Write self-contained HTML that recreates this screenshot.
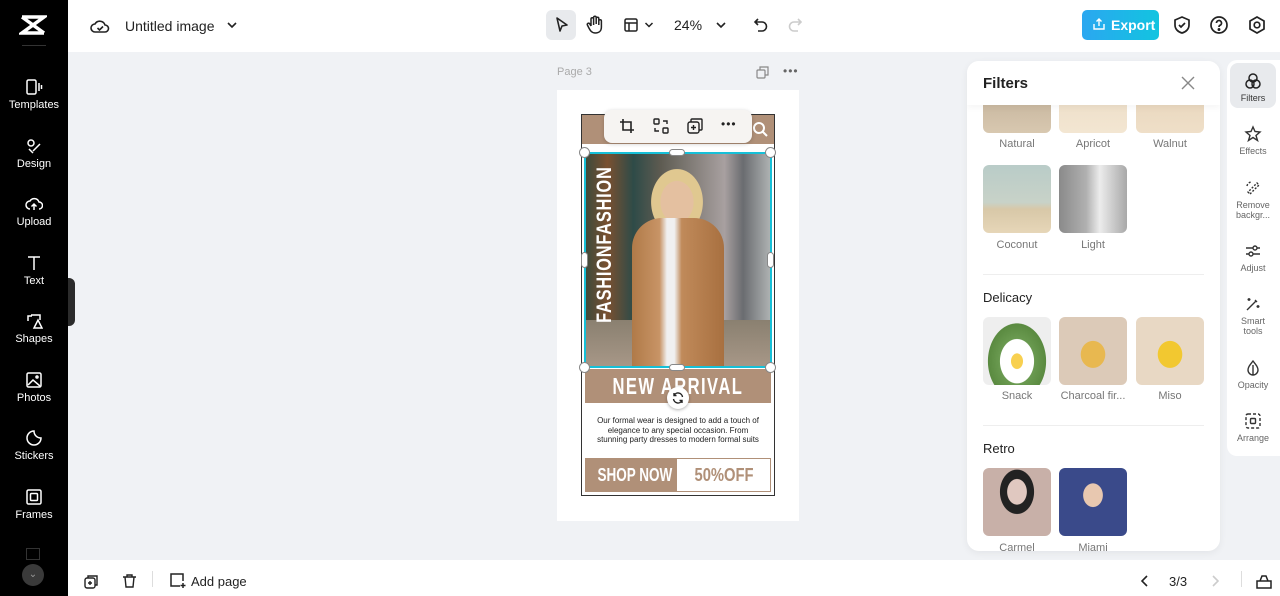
<!DOCTYPE html>
<html><head><meta charset="utf-8"><style>
*{box-sizing:border-box;margin:0;padding:0}
body{width:1280px;height:596px;overflow:hidden;font-family:"Liberation Sans",sans-serif;background:#f0f2f5;position:relative;color:#1f1f1f}
.abs{position:absolute}
.side{left:0;top:0;width:68px;height:596px;background:#000}
.si{position:absolute;left:0;width:68px;text-align:center;color:#fff;font-size:11px}
.si svg{display:block;margin:0 auto 3px}
.top{left:68px;top:0;width:1212px;height:52px;background:#fff}
.bot{left:68px;top:560px;width:1212px;height:36px;background:#fff}
.th{position:absolute;width:68px;height:68px;border-radius:6px}
.lb{position:absolute;width:80px;text-align:center;font-size:11px;color:#777}
.rr{position:absolute;left:0;width:52px;text-align:center;font-size:9px;color:#666;line-height:10px}
.rr svg{display:block;margin:0 auto 3px}
.cond{display:inline-block;white-space:nowrap}
</style></head><body>
<div class="abs side">
 <svg class="abs" style="left:19px;top:14px" width="28" height="22" viewBox="0 0 28 22"><path d="M3 3h22L3 19h22M3 3l22 16" stroke="#fff" stroke-width="3.5" fill="none"/></svg>
 <div class="abs" style="left:22px;top:45px;width:24px;height:1px;background:#333"></div>
 <div class="si" style="top:78px"><svg width="18" height="18" viewBox="0 0 18 18" fill="none" stroke="#fff" stroke-width="1.5"><rect x="2" y="2" width="9" height="14" rx="1.5"/><path d="M14 5v8M16.5 7v4"/></svg>Templates</div>
 <div class="si" style="top:137px"><svg width="18" height="18" viewBox="0 0 18 18" fill="none" stroke="#fff" stroke-width="1.5"><circle cx="6" cy="6" r="3"/><path d="M8 14l7-7M4 12l4 4"/></svg>Design</div>
 <div class="si" style="top:195px"><svg width="18" height="18" viewBox="0 0 18 18" fill="none" stroke="#fff" stroke-width="1.5"><path d="M5 14a4 4 0 0 1 0-8 5 5 0 0 1 9 1 3.5 3.5 0 0 1 0 7M9 15V9M6.5 11.5L9 9l2.5 2.5"/></svg>Upload</div>
 <div class="si" style="top:254px"><svg width="18" height="18" viewBox="0 0 18 18" fill="none" stroke="#fff" stroke-width="1.5"><path d="M3 3h12M9 3v13"/></svg>Text</div>
 <div class="si" style="top:312px"><svg width="18" height="18" viewBox="0 0 18 18" fill="none" stroke="#fff" stroke-width="1.5"><path d="M7 4H3v5M9 16l4-8 4 8zM6 3h9v5"/></svg>Shapes</div>
 <div class="si" style="top:371px"><svg width="18" height="18" viewBox="0 0 18 18" fill="none" stroke="#fff" stroke-width="1.5"><rect x="2" y="2" width="14" height="14" rx="1.5"/><path d="M3 14l5-5 7 6"/><circle cx="12" cy="6" r="1"/></svg>Photos</div>
 <div class="si" style="top:429px"><svg width="18" height="18" viewBox="0 0 18 18" fill="none" stroke="#fff" stroke-width="1.5"><path d="M16 9a7 7 0 1 1-7-7c0 4 3 7 7 7z"/></svg>Stickers</div>
 <div class="si" style="top:488px"><svg width="18" height="18" viewBox="0 0 18 18" fill="none" stroke="#fff" stroke-width="1.5"><rect x="2" y="2" width="14" height="14" rx="1.5"/><rect x="5.5" y="5.5" width="7" height="7" rx="1"/></svg>Frames</div>
 <div class="abs" style="left:26px;top:548px;width:14px;height:12px;border:1.5px solid #333"></div>
 <div class="abs" style="left:22px;top:564px;width:22px;height:22px;border-radius:50%;background:#3a3a3a;color:#999;font-size:10px;text-align:center;line-height:22px">⌄</div>
</div>
<div class="abs" style="left:68px;top:278px;width:7px;height:48px;background:#2b2b2b;border-radius:0 6px 6px 0"></div>
<div class="abs top">
 <svg class="abs" style="left:22px;top:17px" width="20" height="18" viewBox="0 0 20 18" fill="none" stroke="#222" stroke-width="1.6"><path d="M5 15a4 4 0 0 1 0-8 5.5 5.5 0 0 1 10 1 3.5 3.5 0 0 1 0 7z"/><path d="M7.5 11l2 2 3.5-3.5"/></svg>
 <div class="abs" style="left:57px;top:18px;font-size:14px;color:#222">Untitled image</div>
 <svg class="abs" style="left:158px;top:20px" width="12" height="10" viewBox="0 0 12 10"><path d="M2 3l4 4 4-4" stroke="#222" stroke-width="1.6" fill="none"/></svg>
 <div class="abs" style="left:478px;top:10px;width:30px;height:30px;border-radius:6px;background:#e8eaed"></div>
 <svg class="abs" style="left:486px;top:16px" width="16" height="18" viewBox="0 0 16 18"><path d="M3 2l10 7-5 1-2 5z" stroke="#222" stroke-width="1.6" fill="none" stroke-linejoin="round"/></svg>
 <svg class="abs" style="left:518px;top:15px" width="18" height="20" viewBox="0 0 18 20" fill="none" stroke="#222" stroke-width="1.5"><path d="M5 11V4a1.3 1.3 0 0 1 2.6 0v6M7.6 9V2.5a1.3 1.3 0 0 1 2.6 0V9M10.2 9V3.5a1.3 1.3 0 0 1 2.6 0V10M12.8 10V6a1.3 1.3 0 0 1 2.6 0v6c0 4-2.5 6-6 6s-5-2-7-6l-1-2a1.3 1.3 0 0 1 2.3-1.2L5 11"/></svg>
 <svg class="abs" style="left:555px;top:17px" width="16" height="16" viewBox="0 0 16 16" fill="none" stroke="#222" stroke-width="1.5"><rect x="2" y="2" width="12" height="12" rx="1.5"/><path d="M2 6h12M6 6v8"/></svg>
 <svg class="abs" style="left:576px;top:20px" width="10" height="10" viewBox="0 0 10 10"><path d="M1.5 3l3.5 3.5L8.5 3" stroke="#222" stroke-width="1.5" fill="none"/></svg>
 <div class="abs" style="left:606px;top:17px;font-size:14px;color:#222">24%</div>
 <svg class="abs" style="left:647px;top:20px" width="12" height="10" viewBox="0 0 12 10"><path d="M2 3l4 4 4-4" stroke="#222" stroke-width="1.6" fill="none"/></svg>
 <svg class="abs" style="left:684px;top:16px" width="18" height="18" viewBox="0 0 18 18" fill="none" stroke="#222" stroke-width="1.6"><path d="M6 3L3 6l3 3M3 6h7a4.5 4.5 0 0 1 0 9H6"/></svg>
 <svg class="abs" style="left:718px;top:16px" width="18" height="18" viewBox="0 0 18 18" fill="none" stroke="#ccc" stroke-width="1.6"><path d="M12 3l3 3-3 3M15 6H8a4.5 4.5 0 0 0 0 9h4"/></svg>
 <div class="abs" style="left:1014px;top:10px;width:77px;height:30px;border-radius:5px;background:linear-gradient(90deg,#2ba7f0,#12c4e0);color:#fff;font-size:14px;font-weight:bold;line-height:30px;padding-left:29px">Export</div>
 <svg class="abs" style="left:1024px;top:17px" width="14" height="14" viewBox="0 0 14 14" fill="none" stroke="#fff" stroke-width="1.4"><path d="M2 7v5h10V7M7 9V2M4.5 4.5L7 2l2.5 2.5"/></svg>
 <svg class="abs" style="left:1104px;top:15px" width="20" height="20" viewBox="0 0 20 20" fill="none" stroke="#222" stroke-width="1.7"><path d="M10 2l7 3v5c0 4-3 7-7 8-4-1-7-4-7-8V5z"/><path d="M7 10l2 2 4-4"/></svg>
 <svg class="abs" style="left:1141px;top:15px" width="20" height="20" viewBox="0 0 20 20" fill="none" stroke="#222" stroke-width="1.7"><circle cx="10" cy="10" r="8"/><path d="M7.5 8a2.5 2.5 0 1 1 3.5 2.3c-.8.4-1 .9-1 1.7"/><circle cx="10" cy="14.5" r=".6" fill="#222"/></svg>
 <svg class="abs" style="left:1179px;top:15px" width="20" height="20" viewBox="0 0 20 20" fill="none" stroke="#222" stroke-width="1.7"><path d="M10 2l7 4v8l-7 4-7-4V6z"/><circle cx="10" cy="10" r="2.8"/></svg>
</div>
<!-- canvas -->
<div class="abs" style="left:557px;top:66px;font-size:11px;color:#aaa">Page 3</div>
<svg class="abs" style="left:756px;top:66px" width="13" height="13" viewBox="0 0 13 13" fill="none" stroke="#888" stroke-width="1.2"><rect x="1" y="4" width="8" height="8" rx="1"/><path d="M4 4V1h8v8H9"/></svg>
<div class="abs" style="left:783px;top:64px;font-size:12px;color:#666;letter-spacing:1px">•••</div>
<div class="abs" style="left:557px;top:90px;width:242px;height:431px;background:#fff"></div>
<div class="abs" style="left:581px;top:114px;width:194px;height:382px;border:1.5px solid #333;background:#fff"></div>
<div class="abs" style="left:582px;top:115px;width:192px;height:29px;background:#b09078"></div>
<svg class="abs" style="left:752px;top:121px" width="16" height="16" viewBox="0 0 16 16" fill="none" stroke="#fff" stroke-width="2"><circle cx="7" cy="7" r="5"/><path d="M11 11l4 4"/></svg>
<div class="abs" style="left:585px;top:153px;width:186px;height:215px;background:linear-gradient(90deg,#3b4a3c 0%,#7a5030 12%,#2e4b48 26%,#5c5a50 40%,#a8a0a0 75%,#6a6c70 85%,#b0b4b4 100%)"></div>
<div class="abs" style="left:585px;top:320px;width:186px;height:48px;background:linear-gradient(#8a8070,#a89888)"></div>
<div class="abs" style="left:644px;top:160px;width:66px;height:70px;border-radius:50%;background:radial-gradient(ellipse at 50% 60%,#e4c0a0 0 35%,#e0c890 36% 55%,transparent 56%)"></div>
<div class="abs" style="left:632px;top:218px;width:92px;height:150px;border-radius:30px 30px 0 0;background:linear-gradient(90deg,#b07a48,#c89466 30%,#f0f0f0 38% 46%,#c08a5a 54%,#a87040)"></div>
<div class="abs" style="left:584px;top:152px;width:188px;height:216px;border:2px solid #16c0d8"></div>
<div class="abs" style="left:520px;top:245px;width:170px;height:30px;transform:rotate(-90deg);color:#fff;font-weight:bold;font-size:21px;white-space:nowrap;line-height:30px;text-align:center"><span class="cond" style="transform:scaleX(0.78);letter-spacing:1px">FASHIONFASHION</span></div>
<div class="abs" style="left:585px;top:369px;width:186px;height:34px;background:#b09078;color:#fff;font-size:23px;font-weight:bold;text-align:center;line-height:34px"><span class="cond" style="transform:scaleX(0.72);letter-spacing:2px">NEW ARRIVAL</span></div>
<div class="abs" style="left:592px;top:416px;width:172px;font-size:8px;line-height:9.5px;text-align:center;color:#222">Our formal wear is designed to add a touch of elegance to any special occasion. From stunning party dresses to modern formal suits</div>
<div class="abs" style="left:585px;top:458px;width:186px;height:34px;border:1.5px solid #b09078"></div>
<div class="abs" style="left:585px;top:458px;width:92px;height:34px;background:#b09078;color:#fff;font-size:18px;font-weight:bold;line-height:34px;text-align:center;white-space:nowrap"><span class="cond" style="transform:scaleX(0.75)">SHOP NOW</span></div>
<div class="abs" style="left:677px;top:458px;width:94px;height:34px;color:#b09078;font-size:18px;font-weight:bold;line-height:34px;text-align:center;white-space:nowrap"><span class="cond" style="transform:scaleX(0.82)">50%OFF</span></div>
<!-- handles -->
<div class="abs" style="left:579px;top:147px;width:11px;height:11px;border-radius:50%;background:#fff;border:1px solid #888"></div>
<div class="abs" style="left:765px;top:147px;width:11px;height:11px;border-radius:50%;background:#fff;border:1px solid #888"></div>
<div class="abs" style="left:579px;top:362px;width:11px;height:11px;border-radius:50%;background:#fff;border:1px solid #888"></div>
<div class="abs" style="left:765px;top:362px;width:11px;height:11px;border-radius:50%;background:#fff;border:1px solid #888"></div>
<div class="abs" style="left:669px;top:149px;width:16px;height:7px;border-radius:4px;background:#fff;border:1px solid #888"></div>
<div class="abs" style="left:669px;top:364px;width:16px;height:7px;border-radius:4px;background:#fff;border:1px solid #888"></div>
<div class="abs" style="left:581px;top:252px;width:7px;height:16px;border-radius:4px;background:#fff;border:1px solid #888"></div>
<div class="abs" style="left:767px;top:252px;width:7px;height:16px;border-radius:4px;background:#fff;border:1px solid #888"></div>
<div class="abs" style="left:667px;top:387px;width:22px;height:22px;border-radius:50%;background:#fff;box-shadow:0 1px 3px rgba(0,0,0,.3)"></div>
<svg class="abs" style="left:671px;top:391px" width="14" height="14" viewBox="0 0 14 14" fill="none" stroke="#222" stroke-width="1.4"><path d="M11.5 6A4.5 4.5 0 0 0 3 4.5M2.5 8A4.5 4.5 0 0 0 11 9.5M3 2v2.5h2.5M11 12V9.5H8.5"/></svg>
<div class="abs" style="left:604px;top:110px;width:148px;height:33px;border-radius:8px;background:#f6f4f2;box-shadow:0 1px 4px rgba(0,0,0,.2)"></div>
<svg class="abs" style="left:619px;top:118px" width="16" height="16" viewBox="0 0 16 16" fill="none" stroke="#222" stroke-width="1.6"><path d="M4 1v11h11M1 4h11v11"/></svg>
<svg class="abs" style="left:653px;top:118px" width="16" height="16" viewBox="0 0 16 16" fill="none" stroke="#222" stroke-width="1.4"><rect x="1" y="1" width="5" height="5" rx="1"/><rect x="10" y="10" width="5" height="5" rx="1"/><path d="M10 3h4v3M6 13H2v-3"/></svg>
<svg class="abs" style="left:687px;top:118px" width="16" height="16" viewBox="0 0 16 16" fill="none" stroke="#222" stroke-width="1.4"><rect x="1" y="4" width="11" height="11" rx="2"/><path d="M4 4V2a1 1 0 0 1 1-1h9a1 1 0 0 1 1 1v9a1 1 0 0 1-1 1h-2M6.5 7v5M4 9.5h5"/></svg>
<div class="abs" style="left:721px;top:117px;font-size:12px;letter-spacing:1px;color:#222">•••</div>
<!-- filters panel -->
<div class="abs" style="left:967px;top:61px;width:253px;height:490px;background:#fff;border-radius:12px;overflow:hidden;box-shadow:0 2px 8px rgba(0,0,0,.06)">
 <div class="th" style="left:16px;top:4px;background:linear-gradient(#b8a58e,#d8c8b0)"></div>
 <div class="th" style="left:92px;top:4px;background:linear-gradient(#e8d8c0,#f3e6d2)"></div>
 <div class="th" style="left:169px;top:4px;background:linear-gradient(#e3d0b5,#efdfc8)"></div>
 <div class="lb" style="left:10px;top:77px">Natural</div><div class="lb" style="left:86px;top:77px">Apricot</div><div class="lb" style="left:163px;top:77px">Walnut</div>
 <div class="th" style="left:16px;top:104px;background:linear-gradient(#b9ccc8 0%,#c8d2c8 55%,#d8c8a8 65%,#e6d6b8 100%)"></div>
 <div class="th" style="left:92px;top:104px;background:linear-gradient(90deg,#8a8a8a,#b0b0b0 40%,#ececec 60%,#a8a8a8)"></div>
 <div class="lb" style="left:10px;top:178px">Coconut</div><div class="lb" style="left:86px;top:178px">Light</div>
 <div class="abs" style="left:16px;top:213px;width:221px;height:1px;background:#eee"></div>
 <div class="abs" style="left:16px;top:229px;font-size:13px;color:#222">Delicacy</div>
 <div class="th" style="left:16px;top:256px;background:radial-gradient(ellipse at 50% 65%,#f8d050 0 12%,#fff 13% 35%,#6a9a50 36%,#5a8a40 60%,#eee 61%)"></div>
 <div class="th" style="left:92px;top:256px;background:radial-gradient(ellipse at 50% 55%,#e8b850 0 25%,#dccab8 26%)"></div>
 <div class="th" style="left:169px;top:256px;background:radial-gradient(ellipse at 50% 55%,#f2c830 0 25%,#e8d8c4 26%)"></div>
 <div class="lb" style="left:10px;top:329px">Snack</div><div class="lb" style="left:86px;top:329px">Charcoal fir...</div><div class="lb" style="left:163px;top:329px">Miso</div>
 <div class="abs" style="left:16px;top:364px;width:221px;height:1px;background:#eee"></div>
 <div class="abs" style="left:16px;top:380px;font-size:13px;color:#222">Retro</div>
 <div class="th" style="left:16px;top:407px;background:radial-gradient(ellipse at 50% 35%,#e0c8c0 0 20%,#222 21% 35%,#c8b0a8 36%)"></div>
 <div class="th" style="left:92px;top:407px;background:radial-gradient(ellipse at 50% 40%,#e8c8b0 0 20%,#3a4a8a 21%)"></div>
 <div class="lb" style="left:10px;top:481px">Carmel</div><div class="lb" style="left:86px;top:481px">Miami</div>
 <div class="abs" style="left:0;top:0;width:253px;height:44px;background:#fff;box-shadow:0 3px 6px rgba(0,0,0,.04)"></div>
 <div class="abs" style="left:16px;top:14px;font-size:15px;font-weight:bold;color:#222">Filters</div>
 <svg class="abs" style="left:214px;top:15px" width="14" height="14" viewBox="0 0 14 14"><path d="M1 1l12 12M13 1L1 13" stroke="#888" stroke-width="1.4"/></svg>
</div>
<!-- right rail -->
<div class="abs" style="left:1227px;top:60px;width:53px;height:396px;background:#fff;border-radius:10px 0 0 10px">
 <div class="abs" style="left:3px;top:3px;width:46px;height:45px;background:#e8eaed;border-radius:8px"></div>
 <div class="rr" style="top:12px;color:#333"><svg width="18" height="18" viewBox="0 0 18 18" fill="none" stroke="#222" stroke-width="1.5"><circle cx="9" cy="6" r="4"/><circle cx="6" cy="12" r="4"/><circle cx="12" cy="12" r="4"/></svg>Filters</div>
 <div class="rr" style="top:65px"><svg width="18" height="18" viewBox="0 0 18 18" fill="none" stroke="#333" stroke-width="1.4"><path d="M9 2l2 4.5 5 .5-4 3.5 1.5 5-4.5-3-4.5 3 1.5-5-4-3.5 5-.5z"/></svg>Effects</div>
 <div class="rr" style="top:119px"><svg width="18" height="18" viewBox="0 0 18 18" fill="none" stroke="#333" stroke-width="1.4"><path d="M6 15l9-9-2-2-9 9zM3 7a5 5 0 0 1 4-4" stroke-dasharray="2 1.5"/></svg>Remove<br>backgr...</div>
 <div class="rr" style="top:182px"><svg width="18" height="18" viewBox="0 0 18 18" fill="none" stroke="#333" stroke-width="1.4"><path d="M2 6h14M2 12h14"/><circle cx="11" cy="6" r="2" fill="#fff"/><circle cx="7" cy="12" r="2" fill="#fff"/></svg>Adjust</div>
 <div class="rr" style="top:235px"><svg width="18" height="18" viewBox="0 0 18 18" fill="none" stroke="#333" stroke-width="1.4"><path d="M3 15l9-9M11 5l2 2M5 3v3M3.5 4.5h3M14 10v3M12.5 11.5h3"/></svg>Smart<br>tools</div>
 <div class="rr" style="top:299px"><svg width="18" height="18" viewBox="0 0 18 18" fill="none" stroke="#333" stroke-width="1.4"><path d="M9 2c3 4 5 6 5 9a5 5 0 0 1-10 0c0-3 2-5 5-9zM9 6v10"/></svg>Opacity</div>
 <div class="rr" style="top:352px"><svg width="18" height="18" viewBox="0 0 18 18" fill="none" stroke="#333" stroke-width="1.4"><rect x="2" y="2" width="14" height="14" rx="2" stroke-dasharray="3 2"/><rect x="6.5" y="6.5" width="5" height="5" rx="1"/></svg>Arrange</div>
</div>
<!-- bottom -->
<div class="abs bot">
 <svg class="abs" style="left:16px;top:14px" width="15" height="15" viewBox="0 0 15 15" fill="none" stroke="#222" stroke-width="1.4"><rect x="1" y="4" width="10" height="10" rx="2"/><path d="M4 4V2h9v9h-2M6 7v4M4 9h4"/></svg>
 <svg class="abs" style="left:54px;top:13px" width="15" height="16" viewBox="0 0 15 16" fill="none" stroke="#222" stroke-width="1.4"><path d="M1 4h13M5 4V2h5v2M3 4l1 10h7l1-10"/></svg>
 <div class="abs" style="left:84px;top:11px;width:1px;height:16px;background:#ddd"></div>
 <svg class="abs" style="left:101px;top:12px" width="17" height="17" viewBox="0 0 17 17" fill="none" stroke="#222" stroke-width="1.5"><path d="M11 14H2V2h12v7M14 11v5M11.5 13.5h5"/></svg>
 <div class="abs" style="left:123px;top:14px;font-size:13px;color:#222">Add page</div>
 <svg class="abs" style="left:1072px;top:14px" width="10" height="14" viewBox="0 0 10 14"><path d="M7 2L2 7l5 5" stroke="#222" stroke-width="1.6" fill="none"/></svg>
 <div class="abs" style="left:1101px;top:14px;font-size:13px;color:#222">3/3</div>
 <svg class="abs" style="left:1142px;top:14px" width="10" height="14" viewBox="0 0 10 14"><path d="M3 2l5 5-5 5" stroke="#ccc" stroke-width="1.6" fill="none"/></svg>
 <div class="abs" style="left:1173px;top:11px;width:1px;height:16px;background:#ddd"></div>
 <svg class="abs" style="left:1188px;top:13px" width="16" height="16" viewBox="0 0 16 16" fill="none" stroke="#222" stroke-width="1.5"><path d="M1 8h14v7H1zM4 8l2-5h4l2 5"/></svg>
</div>
</body></html>
